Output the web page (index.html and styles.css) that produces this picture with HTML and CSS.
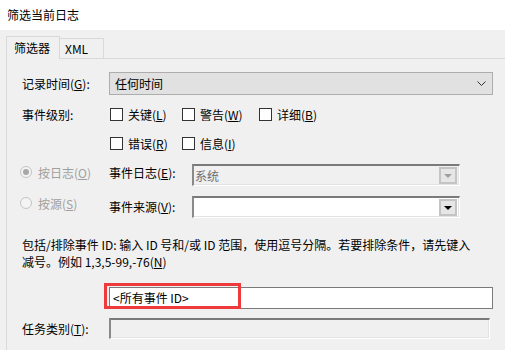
FILE: index.html
```html
<!DOCTYPE html>
<html lang="zh-CN">
<head>
<meta charset="utf-8">
<title>筛选当前日志</title>
<link rel="stylesheet" href="styles.css">
</head>
<body>
<div class="titlebar">筛选当前日志</div>
<div class="tabs">
  <div class="tab active">筛选器</div>
  <div class="tab">XML</div>
</div>
<div class="panel">
  <div class="row-time">
    <span class="lbl">记录时间(<u>G</u>):</span>
    <div class="select">
      <span>任何时间</span>
      <svg class="chev" width="9" height="6" viewBox="0 0 9 6"><path d="M0.5 0.5 L4.5 4.5 L8.5 0.5" fill="none" stroke="#333" stroke-width="1"/></svg>
    </div>
  </div>
  <div class="levels">
    <span class="lbl">事件级别:</span>
    <label class="chk"><span class="box"></span>关键(<u>L</u>)</label>
    <label class="chk"><span class="box"></span>警告(<u>W</u>)</label>
    <label class="chk"><span class="box"></span>详细(<u>B</u>)</label>
    <span></span>
    <label class="chk"><span class="box"></span>错误(<u>R</u>)</label>
    <label class="chk"><span class="box"></span>信息(<u>I</u>)</label>
  </div>
  <div class="src-row first">
    <span class="radio disabled"><span class="circle checked"></span>按日志(<u>O</u>)</span>
    <span class="lbl2">事件日志(<u>E</u>):</span>
    <div class="combo disabled"><span class="ctext">系统</span><span class="cbtn"><span class="tri"></span></span></div>
  </div>
  <div class="src-row second">
    <span class="radio disabled"><span class="circle"></span>按源(<u>S</u>)</span>
    <span class="lbl2">事件来源(<u>V</u>):</span>
    <div class="combo"><span class="ctext"></span><span class="cbtn"><span class="tri"></span></span></div>
  </div>
  <p class="desc">包括/排除事件 ID: 输入 ID 号和/或 ID 范围，使用逗号分隔。若要排除条件，请先键入<br>减号。例如 1,3,5-99,-76(<u>N</u>)</p>
  <div class="id-row">
    <div class="idbox">&lt;所有事件 ID&gt;</div>
    <div class="mark"></div>
  </div>
  <div class="task-row">
    <span class="lbl">任务类别(<u>T</u>):</span>
    <div class="taskbox"></div>
  </div>
</div>
</body>
</html>
```
FILE: styles.css
```css
* { box-sizing: border-box; }
html, body { margin: 0; padding: 0; }
body {
  width: 505px;
  height: 350px;
  overflow: hidden;
  background: #f0f0f0;
  font-family: "Noto Sans CJK SC", "Noto Sans", sans-serif;
  font-size: 12px;
  color: #000;
}
u { text-decoration: underline; text-underline-offset: 1px; }

.titlebar {
  height: 30px;
  background: #fff;
  padding-left: 7px;
  line-height: 29px;
}

.tabs {
  display: flex;
  align-items: flex-end;
  padding: 6px 0 0 6px;
  height: 28px;
}
.tab {
  height: 20px;
  width: 44px;
  padding-left: 5px;
  border: 1px solid #d9d9d9;
  border-bottom: none;
  border-left: none;
  line-height: 20px;
  background: #f0f0f0;
}
.tab.active {
  height: 23px;
  width: 54px;
  padding-left: 7px;
  border-left: 1px solid #d9d9d9;
  margin-bottom: -1px;
  position: relative;
  z-index: 1;
  line-height: 21px;
}

.panel {
  margin-left: 6px;
  border-top: 1px solid #d9d9d9;
  border-left: 1px solid #d9d9d9;
  padding: 13px 0 0 15px;
  height: 292px;
}

.lbl { width: 87px; flex: none; white-space: nowrap; }

.row-time {
  display: flex;
  align-items: center;
  height: 23px;
}
.select {
  width: 384px;
  height: 23px;
  background: #e1e1e1;
  border: 1px solid #adadad;
  display: flex;
  align-items: center;
  justify-content: space-between;
  padding: 0 6px 0 5px;
}
.chev { display: block; }

.levels {
  margin-top: 9px;
  display: grid;
  grid-template-columns: 87px 72px 77px auto;
  grid-auto-rows: 20px;
  row-gap: 9px;
  align-items: center;
}
.chk {
  display: flex;
  align-items: center;
  padding-left: 1px;
  white-space: nowrap;
}
.box {
  width: 13px;
  height: 13px;
  border: 1px solid #333;
  background: #fff;
  margin-right: 5px;
  flex: none;
}

.src-row {
  display: grid;
  grid-template-columns: 87px 83px 268px;
  height: 22px;
  align-items: center;
}
.src-row.first { margin-top: 11px; }
.src-row.second { margin-top: 10px; }
.radio {
  display: flex;
  align-items: center;
  margin-left: -2px;
  white-space: nowrap;
  margin-top: -6px;
}
.radio.disabled { color: #a0a0a0; }
.circle {
  width: 12px;
  height: 12px;
  border-radius: 50%;
  border: 1px solid #c4c4c4;
  background: #f4f4f4;
  margin-right: 6px;
  position: relative;
  flex: none;
}
.circle.checked::after {
  content: "";
  position: absolute;
  left: 2px; top: 2px;
  width: 6px; height: 6px;
  border-radius: 50%;
  background: #a8a8a8;
}
.lbl2 { white-space: nowrap; margin-top: -5px; }
.src-row.second .lbl2 { margin-top: -2px; }
.src-row.second .radio { margin-top: -8px; }

.combo {
  height: 22px;
  border-top: 2px solid #7a7a7a;
  border-left: 2px solid #8a8a8a;
  border-right: 1px solid #fff;
  border-bottom: 1px solid #fff;
  box-shadow: inset -1px -1px 0 #e3e3e3;
  background: #fff;
  display: flex;
  align-items: center;
  justify-content: space-between;
  padding-right: 2px;
}
.combo.disabled { background: #f0f0f0; color: #6d6d6d; }
.ctext { padding-left: 1px; line-height: 16px; }
.cbtn {
  width: 18px;
  height: 17px;
  background: #e6e6e6;
  border: 2px solid #c4c4c4;
  display: flex;
  align-items: center;
  justify-content: center;
}
.tri {
  width: 0; height: 0;
  border-left: 4px solid transparent;
  border-right: 4px solid transparent;
  border-top: 4px solid #000;
}
.combo.disabled .tri { border-top-color: #a0a0a0; }

.desc {
  margin: 18px 0 0 0;
  line-height: 17px;
  white-space: nowrap;
}

.id-row {
  margin-top: 17px;
  margin-left: 87px;
  position: relative;
}
.idbox {
  width: 384px;
  height: 22px;
  border: 1px solid #7a7a7a;
  background: #fff;
  padding-left: 3px;
  line-height: 20px;
}
.mark {
  position: absolute;
  left: -5px;
  top: -4px;
  width: 137px;
  height: 26px;
  border: 3px solid #ee3a3a;
}

.task-row {
  margin-top: 9px;
  display: flex;
  align-items: center;
}
.taskbox {
  width: 381px;
  height: 21px;
  border-top: 2px solid #7a7a7a;
  border-left: 2px solid #8a8a8a;
  border-right: 1px solid #fff;
  border-bottom: 1px solid #fff;
  box-shadow: inset -1px -1px 0 #e3e3e3;
  background: #f0f0f0;
}
```
